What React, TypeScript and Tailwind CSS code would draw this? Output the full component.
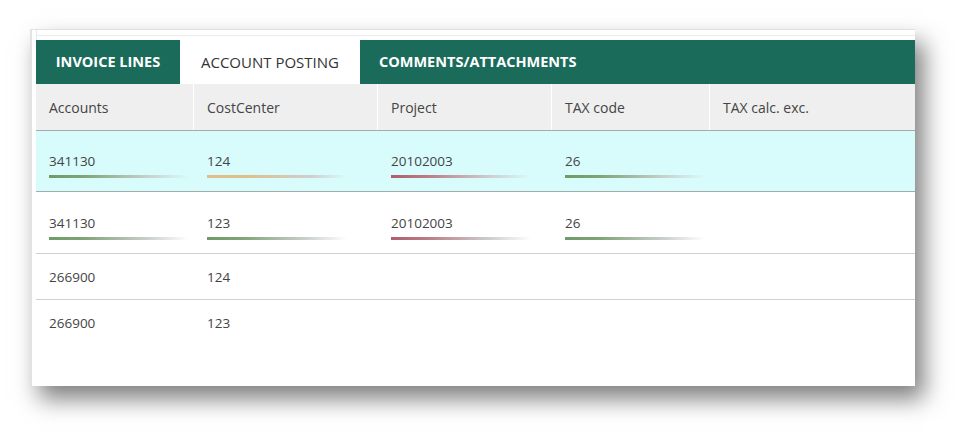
import React from 'react';

const cols = [
  { key: 'acc', label: 'Accounts', w: 'w-[158px]' },
  { key: 'cc', label: 'CostCenter', w: 'w-[184px]' },
  { key: 'proj', label: 'Project', w: 'w-[174px]' },
  { key: 'tax', label: 'TAX code', w: 'w-[158px]' },
  { key: 'calc', label: 'TAX calc. exc.', w: 'flex-1' },
];

type Cell = { text?: string; bar?: 'green' | 'orange' | 'red' };

const rows: { cells: Cell[]; h: string; active?: boolean; border: string }[] = [
  {
    active: true,
    h: 'h-[61px]',
    border: 'border-[#a3abab]',
    cells: [
      { text: '341130', bar: 'green' },
      { text: '124', bar: 'orange' },
      { text: '20102003', bar: 'red' },
      { text: '26', bar: 'green' },
      {},
    ],
  },
  {
    h: 'h-[62px]',
    border: 'border-[#d0d0d0]',
    cells: [
      { text: '341130', bar: 'green' },
      { text: '123', bar: 'green' },
      { text: '20102003', bar: 'red' },
      { text: '26', bar: 'green' },
      {},
    ],
  },
  {
    h: 'h-[46px]',
    border: 'border-[#d0d0d0]',
    cells: [{ text: '266900' }, { text: '124' }, {}, {}, {}],
  },
  {
    h: 'h-[46px]',
    border: 'border-transparent',
    cells: [{ text: '266900' }, { text: '123' }, {}, {}, {}],
  },
];

function Bar({ color }: { color: 'green' | 'orange' | 'red' }) {
  const cls =
    color === 'green'
      ? 'bg-[linear-gradient(to_right,#6f9b68_0%,#7fa477_25%,#c9cfca_70%,rgba(220,220,220,0)_100%)]'
      : color === 'orange'
      ? 'bg-[linear-gradient(to_right,#dfbf86_0%,#dfc08c_30%,#cfcfcf_75%,rgba(220,220,220,0)_100%)]'
      : 'bg-[linear-gradient(to_right,#b05d6c_0%,#bb7a84_25%,#cdcdcd_70%,rgba(220,220,220,0)_100%)]';
  return <div className={`mt-[5px] h-[3px] ${cls}`} />;
}

export default function App() {
  return (
    <div className="w-[972px] h-[443px] bg-white overflow-hidden font-['Open_Sans','Liberation_Sans',sans-serif]">
      <div className="ml-[30px] mt-[29px] w-[885px] h-[357px] bg-white border-t border-l-2 border-[#e2e2e2] shadow-[9px_13px_22px_rgba(0,0,0,0.5)] flex flex-col">
        <div className="ml-[4px] h-[10px] border-l border-[#e8e8e8]">
          <div className="mt-[5px] border-t border-[#ececec]" />
        </div>
        <div className="ml-[4px] flex-1 flex flex-col">
          {/* tabs */}
          <div className="flex h-[44px] bg-[#1b6b5b]">
            <div className="w-[144px] flex items-center justify-center font-bold text-white text-[14.5px]">
              INVOICE LINES
            </div>
            <div className="w-[180px] flex items-center justify-center bg-white text-[#333] text-[15px]">
              ACCOUNT POSTING
            </div>
            <div className="flex items-center pl-[19px] font-bold text-white text-[14.5px]">
              COMMENTS/ATTACHMENTS
            </div>
          </div>
          {/* header */}
          <div className="flex h-[47px] bg-[#efefef] border-b border-[#a3abab] text-[14px] text-[#444]">
            {cols.map((c, i) => (
              <div
                key={c.key}
                className={`${c.w} flex items-center pl-[13px] ${i < cols.length - 1 ? 'border-r border-white' : ''}`}
              >
                {c.label}
              </div>
            ))}
          </div>
          {/* rows */}
          {rows.map((r, ri) => (
            <div
              key={ri}
              className={`flex ${r.h} border-b ${r.border} ${r.active ? 'bg-[#d8fcfc]' : 'bg-white'} text-[13.5px] text-[#444]`}
            >
              {r.cells.map((cell, ci) => (
                <div key={ci} className={`${cols[ci].w} flex flex-col justify-center pl-[13px]`}>
                  {cell.text && (
                    <div className={cell.bar ? 'pt-[8px]' : ''}>
                      <div className="leading-[18px]">{cell.text}</div>
                      {cell.bar && (
                        <div className="w-[140px]">
                          <Bar color={cell.bar} />
                        </div>
                      )}
                    </div>
                  )}
                </div>
              ))}
            </div>
          ))}
        </div>
      </div>
    </div>
  );
}
